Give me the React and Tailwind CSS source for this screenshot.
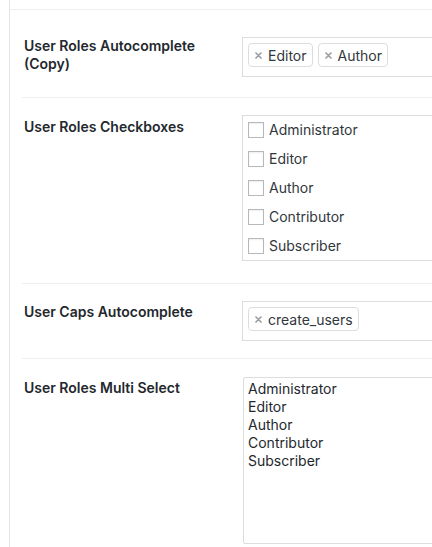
import React from "react";

const font = { fontFamily: "Inter, 'Liberation Sans', sans-serif" };

function X() {
  return (
    <svg width="7" height="7" viewBox="0 0 7 7" className="shrink-0">
      <path d="M1 1L6 6M6 1L1 6" stroke="#9ca0a5" strokeWidth="1.7" strokeLinecap="round" />
    </svg>
  );
}

function Tag({ children }) {
  return (
    <div className="h-[24px] flex items-center border border-[#dddddd] rounded-[4px] bg-white pl-[6px] pr-[5px] gap-[6px] text-[14px] text-[#32373c]">
      <X />
      <span>{children}</span>
    </div>
  );
}

function Label({ children, className = "" }) {
  return (
    <div className={"w-[220px] shrink-0 pl-[2px] pr-[10px] text-[14px] leading-[18px] font-semibold text-[#23282d] " + className}>
      {children}
    </div>
  );
}

export default function App() {
  const roles = ["Administrator", "Editor", "Author", "Contributor", "Subscriber"];
  return (
    <div className="w-[432px] h-[547px] overflow-hidden bg-white flex" style={font}>
      <div className="w-[9px] shrink-0" />
      <div className="flex-1 border-l border-[#e5e5e5] flex flex-col min-w-0">
        <div className="h-[10px] border-b border-[#eeeeee] shrink-0" />
        <div className="ml-[12px] flex flex-col">
          <div className="flex items-start pt-[27px] pb-[20px] border-b border-[#eeeeee]">
            <Label>User Roles Autocomplete (Copy)</Label>
            <div className="w-[300px] shrink-0 h-[40px] border border-[#dddddd] flex items-start gap-[5px] pt-[5px] pl-[5px]">
              <Tag>Editor</Tag>
              <Tag>Author</Tag>
            </div>
          </div>
          <div className="flex items-start pt-[17px] pb-[22px] border-b border-[#eeeeee]">
            <Label className="mt-[3px]">User Roles Checkboxes</Label>
            <div className="w-[300px] shrink-0 h-[146px] border border-[#dddddd] flex flex-col gap-[13px] pt-[6px] pl-[5px]">
              {roles.map((r) => (
                <div key={r} className="h-[16px] flex items-center">
                  <div className="w-[16px] h-[16px] border border-[#b4b9be] bg-white shadow-[inset_0_1px_2px_rgba(0,0,0,0.07)] shrink-0" />
                  <span className="ml-[5px] text-[14px] leading-[18px] text-[#32373c]">{r}</span>
                </div>
              ))}
            </div>
          </div>
          <div className="flex items-start pt-[17px] pb-[17px] border-b border-[#eeeeee]">
            <Label className="mt-[2px]">User Caps Autocomplete</Label>
            <div className="w-[300px] shrink-0 h-[40px] border border-[#dddddd] flex items-start gap-[5px] pt-[5px] pl-[5px]">
              <Tag>create_users</Tag>
            </div>
          </div>
          <div className="flex items-start pt-[18px]">
            <Label className="mt-[2px]">User Roles Multi Select</Label>
            <div className="ml-[1px] w-[300px] shrink-0 h-[167px] border border-[#dddddd] rounded-[2px] pt-[2px] pl-[4px] flex flex-col">
              {roles.map((r) => (
                <div key={r} className="text-[14px] leading-[18px] text-[#23282d]">{r}</div>
              ))}
            </div>
          </div>
        </div>
      </div>
    </div>
  );
}
